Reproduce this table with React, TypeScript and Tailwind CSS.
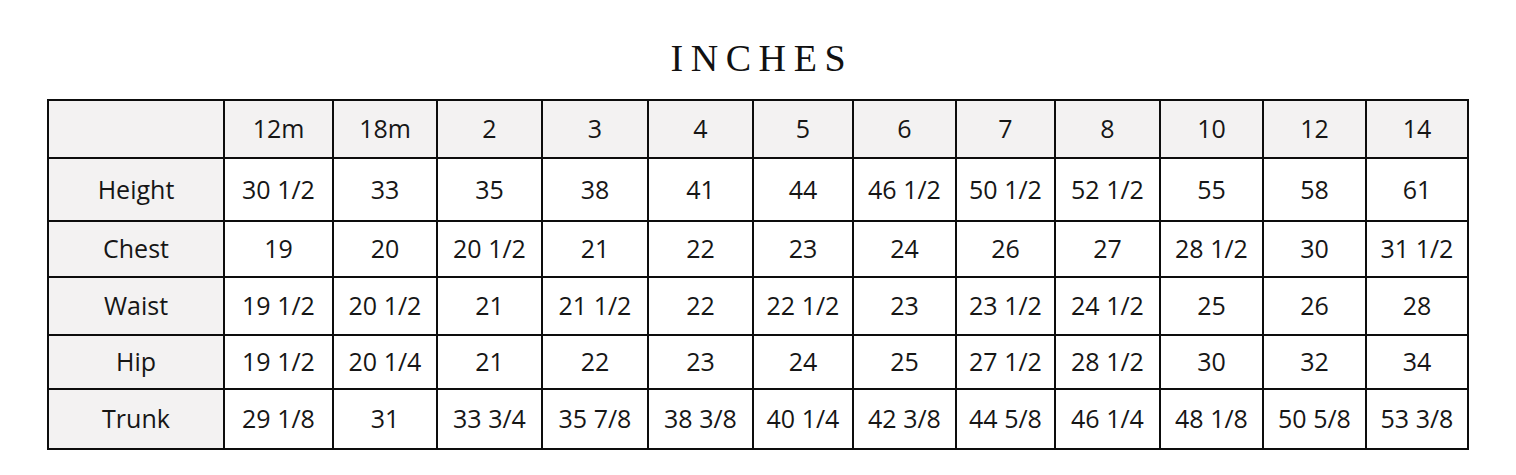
const headers = ["12m", "18m", "2", "3", "4", "5", "6", "7", "8", "10", "12", "14"];

const rows: { label: string; h: string; values: string[] }[] = [
  { label: "Height", h: "h-[63px]", values: ["30 1/2", "33", "35", "38", "41", "44", "46 1/2", "50 1/2", "52 1/2", "55", "58", "61"] },
  { label: "Chest", h: "h-[56px]", values: ["19", "20", "20 1/2", "21", "22", "23", "24", "26", "27", "28 1/2", "30", "31 1/2"] },
  { label: "Waist", h: "h-[58px]", values: ["19 1/2", "20 1/2", "21", "21 1/2", "22", "22 1/2", "23", "23 1/2", "24 1/2", "25", "26", "28"] },
  { label: "Hip", h: "h-[54px]", values: ["19 1/2", "20 1/4", "21", "22", "23", "24", "25", "27 1/2", "28 1/2", "30", "32", "34"] },
  { label: "Trunk", h: "h-[60px]", values: ["29 1/8", "31", "33 3/4", "35 7/8", "38 3/8", "40 1/4", "42 3/8", "44 5/8", "46 1/4", "48 1/8", "50 5/8", "53 3/8"] },
];

// widths of the size columns, left to right
const colWidths = [
  "w-[109px]", "w-[104px]", "w-[105px]", "w-[106px]", "w-[105px]", "w-[100px]",
  "w-[103px]", "w-[99px]", "w-[105px]", "w-[103px]", "w-[103px]", "w-[102px]",
];

const cell = "border-2 border-[#0d0d0d] text-center align-middle p-0";

export default function App() {
  return (
    <div className="w-[1516px] h-[475px] bg-white text-[#161616] font-['Open_Sans',sans-serif]">
      {/* Titre */}
      <div className="pt-[39px] h-[99px]">
        <h1 className="text-center text-[38px] leading-[38px] tracking-[0.2em] pl-[0.2em] font-['Liberation_Serif',serif] text-[#111]">
          INCHES
        </h1>
      </div>

      {/* Tableau */}
      <div className="pl-[47px]">
        <table className="table-fixed border-collapse w-[1420px] text-[25px] font-normal">
          <colgroup>
            <col className="w-[176px]" />
            {colWidths.map((w, i) => (
              <col key={i} className={w} />
            ))}
          </colgroup>
          <thead>
            <tr className="h-[58px] bg-[#f3f2f2]">
              <th className={cell}></th>
              {headers.map((h) => (
                <th key={h} className={`${cell} font-normal`}>
                  {h}
                </th>
              ))}
            </tr>
          </thead>
          <tbody>
            {rows.map((r) => (
              <tr key={r.label} className={r.h}>
                <td className={`${cell} bg-[#f3f2f2]`}>{r.label}</td>
                {r.values.map((v, i) => (
                  <td key={i} className={`${cell} whitespace-nowrap`}>
                    {v}
                  </td>
                ))}
              </tr>
            ))}
          </tbody>
        </table>
      </div>
    </div>
  );
}
